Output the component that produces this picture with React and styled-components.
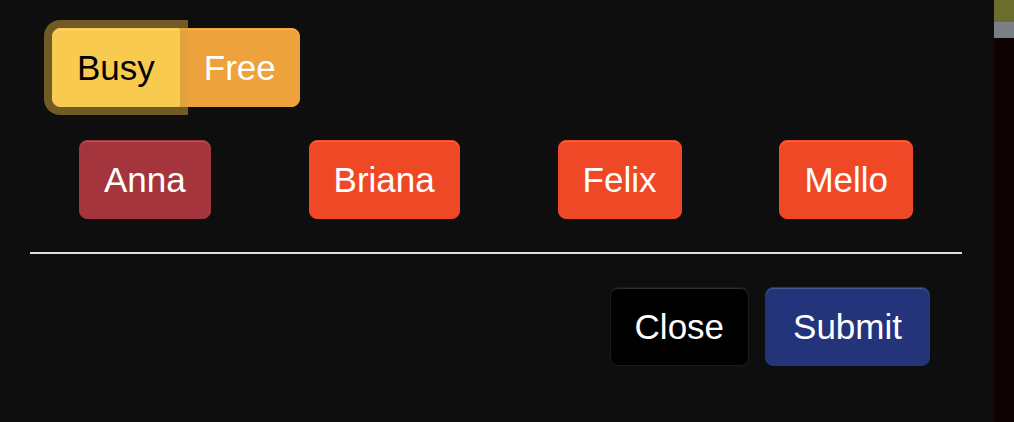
import React, { useState } from 'react';
import styled, { createGlobalStyle } from 'styled-components';

const GlobalStyle = createGlobalStyle`
    html, body {
        margin: 0;
        padding: 0;
        background: #0e0e0e;
    }
    body {
        font-family: "Liberation Sans", Arial, sans-serif;
    }
`;

const Screen = styled.div`
    display: flex;
    width: 1014px;
    height: 422px;
    overflow: hidden;
    background: #0e0e0e;
`;

const Panel = styled.div`
    width: 932px;
    padding: 20px 0 0 30px;
    display: flex;
    flex-direction: column;
`;

const SideStrip = styled.div`
    margin-left: auto;
    width: 20px;
    display: flex;
    flex-direction: column;
    background: #0f0303;
`;

const StripBlock = styled.div`
    height: ${p => p.h}px;
    background: ${p => p.color};
`;

const ToggleGroup = styled.div`
    display: flex;
    align-self: flex-start;
    margin: 8px 0 0 22px;
`;

const Btn = styled.button`
    position: relative;
    font-family: inherit;
    font-size: 35px;
    line-height: 53px;
    padding: 12px ${p => p.px || 24}px;
    border: 1px solid ${p => p.bg};
    border-radius: 8px;
    background: ${p => p.bg};
    color: ${p => p.fg || '#fff'};
    box-shadow: inset 0 1px 0 rgba(255, 255, 255, 0.18);
    cursor: pointer;
    white-space: nowrap;
`;

const ToggleBtn = styled(Btn)`
    border-radius: ${p => (p.first ? '8px 0 0 8px' : '0 8px 8px 0')};
    z-index: ${p => (p.focused ? 1 : 0)};
    box-shadow: ${p =>
        p.focused
            ? 'inset 0 1px 0 rgba(255,255,255,0.18), 0 0 0 8px rgba(212, 166, 62, 0.5)'
            : 'inset 0 1px 0 rgba(255,255,255,0.18)'};
`;

const PeopleRow = styled.div`
    display: flex;
    justify-content: space-around;
    margin-top: 33px;
`;

const Divider = styled.hr`
    width: 100%;
    margin: 33px 0 0;
    border: 0;
    height: 2px;
    background: #dedede;
`;

const Footer = styled.div`
    display: flex;
    justify-content: flex-end;
    gap: 16px;
    margin-top: 33px;
    padding-right: 32px;
`;

const CloseBtn = styled(Btn)`
    border-color: #1c1c1c;
`;

const people = [
    { name: 'Anna', color: '#a4353c' },
    { name: 'Briana', color: '#ef4826' },
    { name: 'Felix', color: '#ef4826' },
    { name: 'Mello', color: '#ef4826' },
];

const App = () => {
    const [status, setStatus] = useState('busy');

    return (
        <Screen>
            <GlobalStyle />
            <Panel>
                <ToggleGroup>
                    <ToggleBtn
                        first
                        focused={status === 'busy'}
                        bg="#f8cb50"
                        fg="#000"
                        onClick={() => setStatus('busy')}
                    >
                        Busy
                    </ToggleBtn>
                    <ToggleBtn
                        focused={status === 'free'}
                        bg="#eea23c"
                        px={23}
                        onClick={() => setStatus('free')}
                    >
                        Free
                    </ToggleBtn>
                </ToggleGroup>
                <PeopleRow>
                    {people.map(person => (
                        <Btn key={person.name} bg={person.color}>
                            {person.name}
                        </Btn>
                    ))}
                </PeopleRow>
                <Divider />
                <Footer>
                    <CloseBtn bg="#000">Close</CloseBtn>
                    <Btn bg="#23347a" px={27}>Submit</Btn>
                </Footer>
            </Panel>
            <SideStrip>
                <StripBlock h={22} color="#6b6d2f" />
                <StripBlock h={16} color="#7b8088" />
            </SideStrip>
        </Screen>
    );
};

export default App;
